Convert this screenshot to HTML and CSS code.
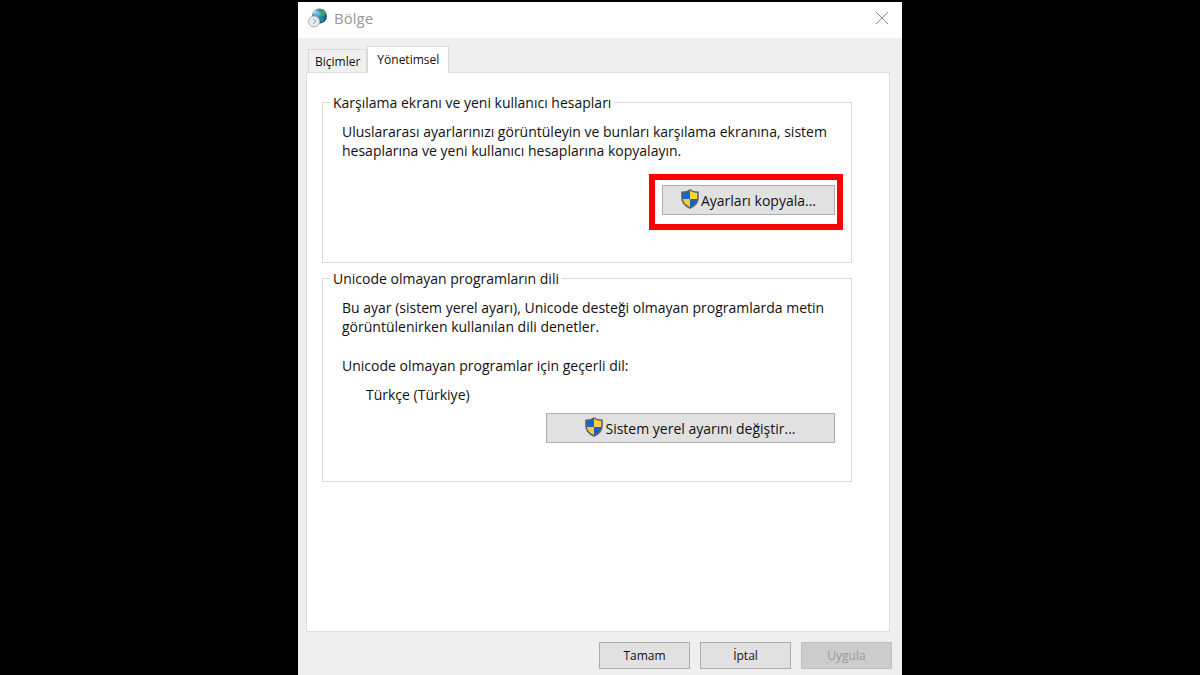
FILE: index.html
```
<!DOCTYPE html>
<html lang="tr">
<head>
  <meta charset="UTF-8">
  <title>Bölge</title>
  <meta name="viewport" content="width=device-width, initial-scale=1.0">
  <link rel="stylesheet" href="styles.css">
</head>
<body>
  <!-- Shield drawing shared by the administrator buttons -->
  <svg class="defs" aria-hidden="true">
    <symbol id="shield" viewBox="0 0 18 20">
      <clipPath id="shield-clip">
        <path d="M9 1C7 2.6 4.5 3.3 1 3.4V9C1 13.5 4.5 17 9 19C13.5 17 17 13.5 17 9V3.4C13.5 3.3 11 2.6 9 1Z"/>
      </clipPath>
      <g clip-path="url(#shield-clip)">
        <rect width="9" height="10" fill="#1767c4"/>
        <rect x="9" width="9" height="10" fill="#fbd13d"/>
        <rect y="10" width="9" height="10" fill="#f7c92f"/>
        <rect x="9" y="10" width="9" height="10" fill="#1662bd"/>
      </g>
      <path d="M9 1C7 2.6 4.5 3.3 1 3.4V9C1 13.5 4.5 17 9 19C13.5 17 17 13.5 17 9V3.4C13.5 3.3 11 2.6 9 1Z" fill="none" stroke="#5a646b" stroke-width="1.6"/>
    </symbol>
  </svg>

  <main class="dialog">
    <header class="title-bar">
      <svg class="app-icon" viewBox="0 0 20 20" aria-hidden="true">
        <defs>
          <radialGradient id="sea" cx="0.4" cy="0.3" r="0.8">
            <stop offset="0" stop-color="#7cc8f0"/>
            <stop offset="0.5" stop-color="#2274c4"/>
            <stop offset="1" stop-color="#0b2f7c"/>
          </radialGradient>
        </defs>
        <circle cx="11.5" cy="8" r="7.5" fill="url(#sea)"/>
        <path d="M11 1C14 0.5 17 2 18 5L16 8L13 7L14 5L11 4Z" fill="#3fa546"/>
        <path d="M13 9L16 10L15 14L12 14Z" fill="#2f9850"/>
        <path d="M5 4L8 2L9 4L6 7Z" fill="#a8dcc0"/>
        <circle cx="6" cy="13.5" r="5.5" fill="#e6eaed" stroke="#a9b2ba"/>
        <path d="M5 11L8 13L5 16" fill="none" stroke="#8fa3b8"/>
      </svg>
      <h1>Bölge</h1>
      <button class="close" type="button" aria-label="Kapat">
        <svg viewBox="0 0 14 14" aria-hidden="true"><path d="M1 1L13 13M13 1L1 13"/></svg>
      </button>
    </header>

    <div class="tabs" role="tablist">
      <button class="tab" type="button" role="tab" aria-selected="false">Biçimler</button>
      <button class="tab active" type="button" role="tab" aria-selected="true">Yönetimsel</button>
    </div>

    <section class="panel" role="tabpanel">
      <fieldset class="group welcome">
        <legend>Karşılama ekranı ve yeni kullanıcı hesapları</legend>
        <p>Uluslararası ayarlarınızı görüntüleyin ve bunları karşılama ekranına, sistem hesaplarına ve yeni kullanıcı hesaplarına kopyalayın.</p>
        <div class="actions">
          <div class="highlight">
            <button class="btn copy" type="button"><svg class="shield" aria-hidden="true"><use href="#shield"/></svg>Ayarları kopyala...</button>
          </div>
        </div>
      </fieldset>

      <fieldset class="group language">
        <legend>Unicode olmayan programların dili</legend>
        <p>Bu ayar (sistem yerel ayarı), Unicode desteği olmayan programlarda metin görüntülenirken kullanılan dili denetler.</p>
        <p class="current">Unicode olmayan programlar için geçerli dil:</p>
        <p class="value">Türkçe (Türkiye)</p>
        <div class="actions">
          <button class="btn locale" type="button"><svg class="shield" aria-hidden="true"><use href="#shield"/></svg>Sistem yerel ayarını değiştir...</button>
        </div>
      </fieldset>
    </section>

    <footer class="footer">
      <button class="btn small" type="button">Tamam</button>
      <button class="btn small" type="button">İptal</button>
      <button class="btn small" type="button" disabled>Uygula</button>
    </footer>
  </main>
</body>
</html>
```
FILE: styles.css
```
* {
  box-sizing: border-box;
}
body {
  margin: 0;
  padding-top: 2px;
  min-height: 100vh;
  display: flex;
  justify-content: center;
  background: #000;
  color: #111;
  font-family: "Open Sans", "Noto Sans", sans-serif;
  font-size: 14px;
  line-height: 19px;
}
button {
  font: inherit;
  color: inherit;
}
.defs {
  position: absolute;
  width: 0;
  height: 0;
}
.dialog {
  width: 100%;
  max-width: 604px;
  display: flex;
  flex-direction: column;
  background: #efefef;
}

/* Title bar */
.title-bar {
  height: 36px;
  padding: 0 13px 4px 10px;
  display: flex;
  align-items: center;
  background: #fff;
}
.app-icon {
  width: 20px;
  height: 20px;
}
.title-bar h1 {
  flex: 1;
  margin: 0 0 0 6px;
  font-size: 15px;
  font-weight: normal;
  color: #999;
}
.close {
  width: 14px;
  height: 14px;
  padding: 0;
  border: none;
  background: none;
}
.close svg {
  display: block;
  stroke: #8c8c8c;
}

/* Tabs */
.tabs {
  display: flex;
  align-items: flex-end;
  padding: 8px 10px 0;
}
.tab {
  height: 23px;
  padding: 0 6px;
  border: 1px solid #d9d9d9;
  border-bottom: none;
  background: #f0f0f0;
  font-size: 12px;
}
.tab.active {
  height: 27px;
  margin-bottom: -1px;
  padding: 0 9px 2px;
  background: #fff;
  position: relative;
}
.panel {
  flex: 1;
  margin: 0 12px 0 8px;
  padding: 20px 37px 16px 15px;
  border: 1px solid #dcdcdc;
  background: #fff;
}

/* Group boxes */
.group {
  min-width: 0;
  margin: 0;
  padding: 10px 16px 0 19px;
  border: 1px solid #dcdcdc;
}
.group legend {
  margin-left: -12px;
  padding: 0 3px;
}
.group p {
  margin: 0;
}
.group .current {
  margin-top: 20px;
}
.group .value {
  margin: 10px 0 0 24px;
}
.welcome {
  padding-bottom: 47px;
}
.language {
  margin-top: 6px;
  padding-bottom: 38px;
}
.actions {
  display: flex;
  justify-content: flex-end;
  margin-top: 9px;
}
.welcome .actions {
  margin-top: 25px;
}

/* Red frame around the button */
.highlight {
  position: relative;
}
.highlight::after {
  content: "";
  position: absolute;
  inset: -11px -8px -15px -13px;
  border: 6px solid #fe0000;
  pointer-events: none;
}

/* Buttons */
.btn {
  height: 30px;
  padding: 0 8px;
  display: flex;
  align-items: center;
  justify-content: center;
  border: 1px solid #adadad;
  background: #e1e1e1;
}
.shield {
  width: 18px;
  height: 20px;
  margin: 0 2px 2px 0;
}
.copy {
  width: 173px;
}
.locale {
  width: 289px;
}
.footer {
  display: flex;
  justify-content: flex-end;
  gap: 10px;
  padding: 10px 10px 6px;
}
.small {
  width: 91px;
  height: 27px;
  font-size: 12px;
}
.small:disabled {
  border-color: #bfbfbf;
  background: #ccc;
  color: #9a9a9a;
}
```
